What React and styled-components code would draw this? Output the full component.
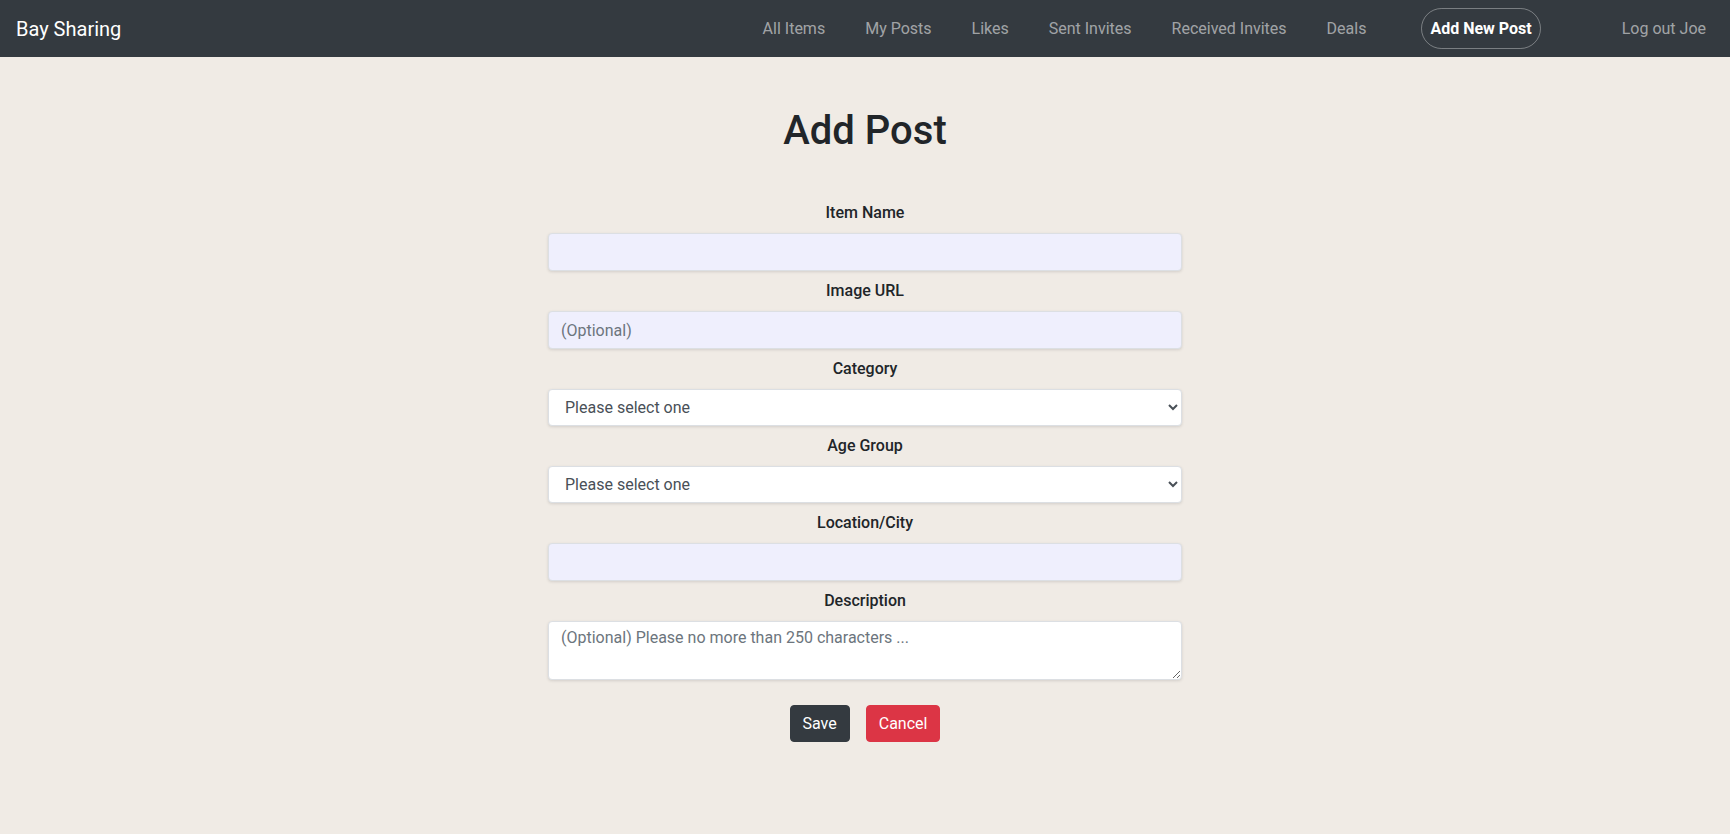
import React, { useState } from "react";
import styled, { createGlobalStyle } from "styled-components";

const GlobalStyle = createGlobalStyle`
  body {
    margin: 0;
    background-color: #f0ebe5;
    font-family: Roboto, "Liberation Sans", sans-serif;
    color: #212529;
  }
  * {
    box-sizing: border-box;
  }
`;

const links = ["All Items", "My Posts", "Likes", "Sent Invites", "Received Invites", "Deals"];

const App = () => {
  const [form, setForm] = useState({
    name: "",
    image: "",
    category: "",
    age: "",
    location: "",
    description: "",
  });

  const update = (key) => (e) => setForm({ ...form, [key]: e.target.value });

  return (
    <>
      <GlobalStyle />
      <Navbar>
        <Brand href="#">Bay Sharing</Brand>
        <NavList>
          {links.map((l) => (
            <NavLink key={l} href="#">
              {l}
            </NavLink>
          ))}
          <PillLink href="#">Add New Post</PillLink>
          <NavLink href="#">Log out Joe</NavLink>
        </NavList>
      </Navbar>

      <Main>
        <Title>Add Post</Title>
        <Form onSubmit={(e) => e.preventDefault()}>
          <Label htmlFor="name">Item Name</Label>
          <Input id="name" value={form.name} onChange={update("name")} />

          <Label htmlFor="image">Image URL</Label>
          <Input
            id="image"
            placeholder="(Optional)"
            value={form.image}
            onChange={update("image")}
          />

          <Label htmlFor="category">Category</Label>
          <Select id="category" value={form.category} onChange={update("category")}>
            <option value="">Please select one</option>
            <option value="toys">Toys</option>
            <option value="books">Books</option>
            <option value="clothes">Clothes</option>
          </Select>

          <Label htmlFor="age">Age Group</Label>
          <Select id="age" value={form.age} onChange={update("age")}>
            <option value="">Please select one</option>
            <option value="baby">0 - 2</option>
            <option value="kid">3 - 6</option>
            <option value="child">7 - 12</option>
          </Select>

          <Label htmlFor="location">Location/City</Label>
          <Input id="location" value={form.location} onChange={update("location")} />

          <Label htmlFor="description">Description</Label>
          <TextArea
            id="description"
            placeholder="(Optional) Please no more than 250 characters ..."
            value={form.description}
            onChange={update("description")}
          />

          <Buttons>
            <Button type="submit" $variant="dark">
              Save
            </Button>
            <Button type="button" $variant="danger">
              Cancel
            </Button>
          </Buttons>
        </Form>
      </Main>
    </>
  );
};

const Navbar = styled.nav`
  height: 57px;
  background-color: #343a40;
  display: flex;
  align-items: center;
  justify-content: space-between;
  padding: 0 24px 0 16px;
`;

const Brand = styled.a`
  color: #fff;
  font-size: 20px;
  text-decoration: none;
`;

const NavList = styled.div`
  display: flex;
  align-items: center;
  gap: 40px;
`;

const NavLink = styled.a`
  color: rgba(255, 255, 255, 0.55);
  font-size: 16px;
  text-decoration: none;

  &:hover {
    color: rgba(255, 255, 255, 0.75);
  }
`;

const PillLink = styled.a`
  color: #fff;
  font-size: 16px;
  font-weight: 700;
  text-decoration: none;
  height: 41px;
  display: flex;
  align-items: center;
  padding: 0 8px;
  margin: 0 41px 0 15px;
  border: 1px solid rgba(255, 255, 255, 0.35);
  border-radius: 21px;
`;

const Main = styled.main`
  display: flex;
  flex-direction: column;
  align-items: center;
  padding-top: 50px;
`;

const Title = styled.h1`
  margin: 0 0 46px;
  font-size: 40px;
  font-weight: 500;
  line-height: 48px;
  color: #212529;
`;

const Form = styled.form`
  width: 634px;
  display: flex;
  flex-direction: column;
`;

const Label = styled.label`
  text-align: center;
  font-size: 16px;
  font-weight: 500;
  line-height: 24px;
  margin-bottom: 8px;
`;

const fieldBase = `
  width: 100%;
  font-family: Roboto, "Liberation Sans", sans-serif;
  font-size: 16px;
  color: #212529;
  border: 1px solid #dcdfe3;
  border-radius: 4px;
  box-shadow: 0 1px 3px rgba(0, 0, 0, 0.12);
  margin-bottom: 8px;
  outline: none;

  &::placeholder {
    color: #6c757d;
  }
`;

const Input = styled.input`
  ${fieldBase}
  height: 38px;
  padding: 6px 12px;
  background-color: #efeffd;
`;

const Select = styled.select`
  ${fieldBase}
  height: 37px;
  padding: 6px 12px;
  background-color: #fff;
  color: #495057;
`;

const TextArea = styled.textarea`
  ${fieldBase}
  height: 59px;
  padding: 6px 12px;
  background-color: #fff;
  resize: vertical;
`;

const Buttons = styled.div`
  display: flex;
  justify-content: center;
  gap: 16px;
  margin-top: 17px;
`;

const Button = styled.button`
  font-family: Roboto, "Liberation Sans", sans-serif;
  font-size: 16px;
  color: #fff;
  height: 37px;
  padding: 0 12px;
  border: 1px solid ${(p) => (p.$variant === "danger" ? "#dc3545" : "#343a40")};
  border-radius: 4px;
  background-color: ${(p) => (p.$variant === "danger" ? "#dc3545" : "#343a40")};
  cursor: pointer;
`;

export default App;
